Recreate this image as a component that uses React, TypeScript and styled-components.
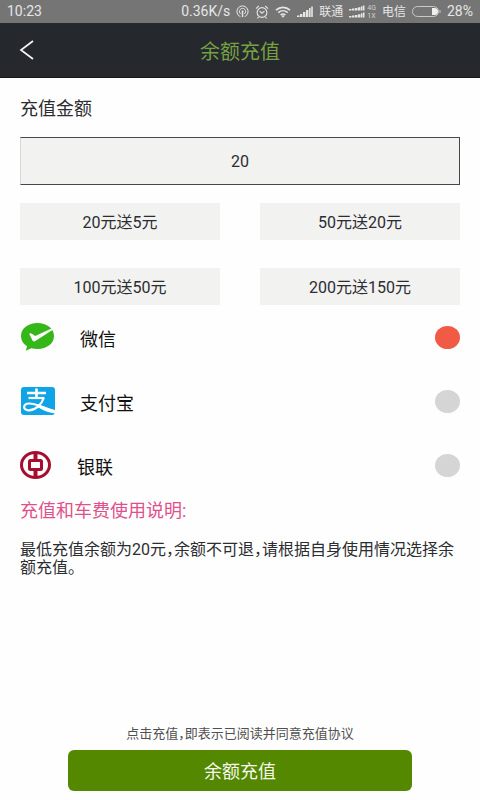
import React, { useState } from "react";
import styled, { createGlobalStyle } from "styled-components";

const GlobalStyle = createGlobalStyle`
  * { box-sizing: border-box; }
  body {
    margin: 0;
    background: #fefefe;
    color: #2b2d30;
    font-family: Roboto, "Noto Sans CJK SC", sans-serif;
  }
  button, input { font: inherit; color: inherit; margin: 0; }
`;

const Screen = styled.div`
  min-height: 100vh;
  display: flex;
  flex-direction: column;
`;

const StatusBar = styled.div`
  height: 23px;
  padding: 0 7px;
  display: flex;
  align-items: center;
  justify-content: space-between;
  background: #757575;
  color: #e6e6e6;
  font-size: 14px;
  line-height: 23px;
  white-space: nowrap;
`;

const StatusItems = styled.div`
  display: flex;
  align-items: center;
  gap: 6px;
  svg { display: block; }
`;

const Carrier = styled.span`
  padding-top: 1px;
  font-size: 12px;
`;

const NetworkTypes = styled.span`
  display: flex;
  flex-direction: column;
  font-size: 7px;
  line-height: 8px;
  color: #d0d0d0;
`;

const DualSignal = styled.span`
  display: flex;
  align-items: center;
  gap: 2px;
`;

const Header = styled.header`
  height: 55px;
  display: grid;
  grid-template-columns: 56px 1fr 56px;
  align-items: center;
  background: #25282d;
  border-bottom: 1px solid #17191c;
`;

const BackButton = styled.button`
  height: 54px;
  padding: 0 0 0 18px;
  border: 0;
  background: none;
  text-align: left;
  svg { display: block; }
`;

const Title = styled.h1`
  margin: 0;
  padding-top: 4px;
  font-size: 20px;
  font-weight: 400;
  line-height: 50px;
  text-align: center;
  color: #76a043;
`;

const Content = styled.main`
  padding: 17px 20px 0;
`;

const AmountLabel = styled.label`
  display: block;
  font-size: 18px;
  line-height: 28px;
`;

const AmountInput = styled.input`
  display: block;
  width: 100%;
  height: 48px;
  margin-top: 14px;
  padding: 0;
  border: 1px solid #48484a;
  border-left-color: #d8d8d8;
  border-radius: 0;
  background: #f2f2f1;
  font-size: 16px;
  text-align: center;
  outline: none;
`;

const OfferGrid = styled.div`
  display: grid;
  grid-template-columns: 1fr 1fr;
  gap: 28px 40px;
  margin-top: 18px;
`;

const OfferButton = styled.button`
  height: 37px;
  padding: 2px 0 0;
  border: 0;
  background: #f2f2f1;
  font-size: 16px;
  line-height: 35px;
`;

const Methods = styled.div`
  display: flex;
  flex-direction: column;
`;

const MethodRow = styled.label`
  height: 64px;
  display: flex;
  align-items: center;
  color: #111111;
  font-size: 18px;
  svg { flex: none; display: block; }
`;

const MethodName = styled.span`
  flex: 1;
  padding-top: 2px;
  margin-left: 24px;
`;

const MethodRadio = styled.input`
  appearance: none;
  width: 25px;
  height: 23px;
  border-radius: 50%;
  background: #d5d5d5;
  &:checked { background: #f15a45; }
`;

const NoticeTitle = styled.h2`
  margin: 0;
  padding-top: 1px;
  font-size: 18px;
  font-weight: 400;
  line-height: 26px;
  color: #e0508a;
`;

const Notice = styled.p`
  margin: 17px 0 0;
  font-size: 16px;
  line-height: 18px;
  font-feature-settings: "halt";
`;

const Footer = styled.footer`
  margin-top: auto;
  padding: 16px 68px 9px;
  display: flex;
  flex-direction: column;
  text-align: center;
`;

const Agreement = styled.p`
  margin: 0 0 6px;
  font-size: 13px;
  line-height: 20px;
  color: #505050;
  white-space: nowrap;
  font-feature-settings: "halt";
`;

const SubmitButton = styled.button`
  height: 41px;
  padding: 2px 0 0;
  border: 0;
  border-radius: 6px;
  background: #548800;
  color: #f4f8ee;
  font-size: 18px;
  line-height: 39px;
`;

const HotspotIcon = () => (
  <svg width="13" height="13" viewBox="0 0 13 13" fill="none" stroke="#e6e6e6">
    <path d="M4.400 11.700a5.600 5.600 0 1 1 4.200 0" />
    <path d="M4.700 9a3.100 3.100 0 1 1 3.600 0" />
    <circle cx="6.500" cy="6.500" r="1" fill="#e6e6e6" stroke="none" />
    <path d="M6.500 7v5" strokeWidth="1.400" />
  </svg>
);

const AlarmIcon = () => (
  <svg width="14" height="14" viewBox="0 0 14 14" fill="none" stroke="#e6e6e6" strokeWidth="1.100">
    <circle cx="7" cy="7.500" r="4.900" />
    <path d="M1 3.600 3.800 1M13 3.600 10.200 1M4.600 6.200 7 8.200l2.400-2M3.600 12l-1.200 1.300M10.400 12l1.200 1.300" />
  </svg>
);

const WifiIcon = () => (
  <svg width="16" height="12" viewBox="0 0 16 12" fill="none" stroke="#e6e6e6" strokeWidth="1.600">
    <path d="M1 4.200c4-3.800 10-3.800 14 0M3.300 6.700c2.800-2.600 6.600-2.600 9.400 0M5.600 9c1.500-1.300 3.300-1.300 4.800 0" />
    <path d="m6.200 9.800 1.800 2 1.800-2Q8 8.700 6.200 9.800Z" fill="#e6e6e6" stroke="none" />
  </svg>
);

const SignalIcon = () => (
  <svg width="16" height="11" viewBox="0 0 16 11" fill="#e6e6e6">
    <path d="M0 9.500h2.500V11H0zM3 8h2.400v3H3zM6 6h2.400v5H6zM9 4h2.400v7H9zM12 2h1.600v9H12zM14.200 0.500h1.600V11h-1.600z" />
  </svg>
);

const DualSignalIcon = () => (
  <svg width="16" height="13" viewBox="0 0 16 13" fill="#e6e6e6">
    <path d="M0 4h2.500v1.500H0zM3 3.500h2.500v2H3zM6 3h2.500v2.500H6zM9 2.200h2.500v3.300H9zM12 1.200h1.500v4.300H12zM14 .500h1.500v5H14z" />
    <path d="M0 11h2.500v1.500H0zM3 10.500h2.500v2H3zM6 10h2.500v2.500H6zM9 9.200h2.500v3.300H9zM12 8.200h1.500v4.300H12zM14 7.500h1.500v5H14z" />
  </svg>
);

const BatteryIcon = () => (
  <svg width="29" height="11" viewBox="0 0 29 11">
    <rect x="0.500" y="0.500" width="26" height="10" rx="5" fill="none" stroke="#c8c8c8" />
    <path d="M20 2h2.500a3.500 3.500 0 0 1 0 7H20z" fill="#f0f0f0" />
    <path d="M28 4v3" stroke="#c8c8c8" />
  </svg>
);

const BackIcon = () => (
  <svg width="17" height="20" viewBox="0 0 17 20" fill="none" stroke="#f5f5f5" strokeWidth="1.700">
    <path d="M15 1 3 10l12 9" />
  </svg>
);

const WeChatPayIcon = () => (
  <svg width="36" height="30" viewBox="0 0 36 30">
    <path d="M17.500 1C8 1 1 6.500 1 14c0 4.300 2.400 8 6.100 10.200L5.700 28.800l5.600-2.600c2 .6 4 .8 6.200.8C27 27 34 21.500 34 14S27 1 17.500 1Z" fill="#35b619" />
    <path d="M9.200 11.800c.8-1 1.600-.7 2.300-.2l3.700 2.500L32 6.200l.8 1.500-17.500 11.400c-1.200.8-2.200.5-2.800-.7Z" fill="#fff" />
  </svg>
);

const AlipayIcon = () => (
  <svg width="36" height="28" viewBox="0 0 36 28">
    <rect x="1" y="0" width="34" height="28" rx="3" fill="#0fa4e6" />
    <g fill="none" stroke="#fff">
      <path d="M7 6h19M16.500 1.500V11" strokeWidth="2.600" />
      <path d="M8.500 11H24" strokeWidth="2.200" />
      <path d="M24 10.500C21.500 18 15 23.800 8 23.300c-5.500-.5-5-6.500.8-6.800 6-.4 11 3 26.200 8" strokeWidth="2.200" />
    </g>
    <path d="M18.500 17.600c5 2.400 10 4.400 16.500 5.300V26.500c-7-.9-13-3.700-19-7.300Z" fill="#fff" />
  </svg>
);

const BankIcon = () => (
  <svg width="33" height="28" viewBox="0 0 33 28" fill="none" stroke="#a60d2e">
    <ellipse cx="15.500" cy="14" rx="14" ry="12.500" strokeWidth="3" />
    <rect x="9.500" y="9.500" width="12" height="9" rx="1" strokeWidth="3" />
    <path d="M15.500 1.500v8M15.500 18.500v8" strokeWidth="4" />
  </svg>
);

const offers = ["20元送5元", "50元送20元", "100元送50元", "200元送150元"];

const methods = [
  { id: "wechat", name: "微信", icon: <WeChatPayIcon /> },
  { id: "alipay", name: "支付宝", icon: <AlipayIcon /> },
  { id: "unionpay", name: "银联", icon: <BankIcon /> },
];

export default function App() {
  const [amount, setAmount] = useState("20");
  const [method, setMethod] = useState("wechat");

  return (
    <Screen>
      <GlobalStyle />
      <StatusBar>
        <span>10:23</span>
        <StatusItems>
          <span>0.36K/s</span>
          <HotspotIcon />
          <AlarmIcon />
          <WifiIcon />
          <SignalIcon />
          <Carrier>联通</Carrier>
          <DualSignal>
            <DualSignalIcon />
            <NetworkTypes>
              <span>4G</span>
              <span>1X</span>
            </NetworkTypes>
          </DualSignal>
          <Carrier>电信</Carrier>
          <BatteryIcon />
          <span>28%</span>
        </StatusItems>
      </StatusBar>
      <Header>
        <BackButton type="button" aria-label="返回">
          <BackIcon />
        </BackButton>
        <Title>余额充值</Title>
      </Header>
      <Content>
        <AmountLabel htmlFor="amount">充值金额</AmountLabel>
        <AmountInput
          id="amount"
          inputMode="numeric"
          value={amount}
          onChange={(e) => setAmount(e.target.value)}
        />
        <OfferGrid>
          {offers.map((offer) => (
            <OfferButton key={offer} type="button" onClick={() => setAmount(String(parseInt(offer, 10)))}>
              {offer}
            </OfferButton>
          ))}
        </OfferGrid>
        <Methods role="radiogroup" aria-label="支付方式">
          {methods.map((m) => (
            <MethodRow key={m.id}>
              {m.icon}
              <MethodName>{m.name}</MethodName>
              <MethodRadio
                type="radio"
                name="method"
                checked={method === m.id}
                onChange={() => setMethod(m.id)}
              />
            </MethodRow>
          ))}
        </Methods>
        <NoticeTitle>充值和车费使用说明:</NoticeTitle>
        <Notice>最低充值余额为20元，余额不可退，请根据自身使用情况选择余额充值。</Notice>
      </Content>
      <Footer>
        <Agreement>点击充值，即表示已阅读并同意充值协议</Agreement>
        <SubmitButton type="button">余额充值</SubmitButton>
      </Footer>
    </Screen>
  );
}
